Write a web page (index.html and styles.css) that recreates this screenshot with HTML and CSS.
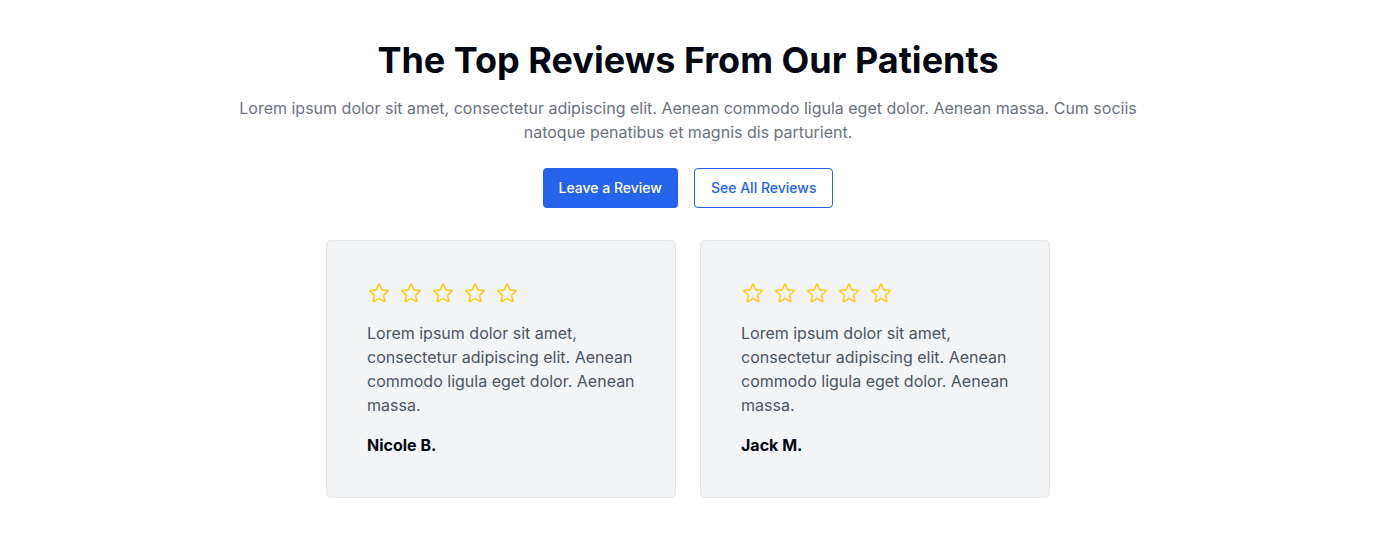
FILE: index.html
```html
<!DOCTYPE html>
<html lang="en">
<head>
<meta charset="utf-8">
<title>Reviews</title>
<link rel="stylesheet" href="styles.css">
</head>
<body>
<section class="reviews">
  <h1 class="title">The Top Reviews From Our Patients</h1>
  <p class="lead">Lorem ipsum dolor sit amet, consectetur adipiscing elit. Aenean commodo ligula eget dolor. Aenean massa. Cum sociis natoque penatibus et magnis dis parturient.</p>
  <div class="actions">
    <a class="btn btn-primary" href="#">Leave a Review</a>
    <a class="btn btn-outline" href="#">See All Reviews</a>
  </div>
  <div class="cards">
    <article class="card">
      <div class="stars">
        <svg viewBox="0 0 24 24"><path d="M11.48 3.499a.562.562 0 011.04 0l2.125 5.111a.563.563 0 00.475.345l5.518.442c.499.04.701.663.321.988l-4.204 3.602a.563.563 0 00-.182.557l1.285 5.385a.562.562 0 01-.84.61l-4.725-2.885a.563.563 0 00-.586 0L6.982 20.54a.562.562 0 01-.84-.61l1.285-5.386a.562.562 0 00-.182-.557l-4.204-3.602a.563.563 0 01.321-.988l5.518-.442a.563.563 0 00.475-.345L11.48 3.5z"/></svg>
        <svg viewBox="0 0 24 24"><path d="M11.48 3.499a.562.562 0 011.04 0l2.125 5.111a.563.563 0 00.475.345l5.518.442c.499.04.701.663.321.988l-4.204 3.602a.563.563 0 00-.182.557l1.285 5.385a.562.562 0 01-.84.61l-4.725-2.885a.563.563 0 00-.586 0L6.982 20.54a.562.562 0 01-.84-.61l1.285-5.386a.562.562 0 00-.182-.557l-4.204-3.602a.563.563 0 01.321-.988l5.518-.442a.563.563 0 00.475-.345L11.48 3.5z"/></svg>
        <svg viewBox="0 0 24 24"><path d="M11.48 3.499a.562.562 0 011.04 0l2.125 5.111a.563.563 0 00.475.345l5.518.442c.499.04.701.663.321.988l-4.204 3.602a.563.563 0 00-.182.557l1.285 5.385a.562.562 0 01-.84.61l-4.725-2.885a.563.563 0 00-.586 0L6.982 20.54a.562.562 0 01-.84-.61l1.285-5.386a.562.562 0 00-.182-.557l-4.204-3.602a.563.563 0 01.321-.988l5.518-.442a.563.563 0 00.475-.345L11.48 3.5z"/></svg>
        <svg viewBox="0 0 24 24"><path d="M11.48 3.499a.562.562 0 011.04 0l2.125 5.111a.563.563 0 00.475.345l5.518.442c.499.04.701.663.321.988l-4.204 3.602a.563.563 0 00-.182.557l1.285 5.385a.562.562 0 01-.84.61l-4.725-2.885a.563.563 0 00-.586 0L6.982 20.54a.562.562 0 01-.84-.61l1.285-5.386a.562.562 0 00-.182-.557l-4.204-3.602a.563.563 0 01.321-.988l5.518-.442a.563.563 0 00.475-.345L11.48 3.5z"/></svg>
        <svg viewBox="0 0 24 24"><path d="M11.48 3.499a.562.562 0 011.04 0l2.125 5.111a.563.563 0 00.475.345l5.518.442c.499.04.701.663.321.988l-4.204 3.602a.563.563 0 00-.182.557l1.285 5.385a.562.562 0 01-.84.61l-4.725-2.885a.563.563 0 00-.586 0L6.982 20.54a.562.562 0 01-.84-.61l1.285-5.386a.562.562 0 00-.182-.557l-4.204-3.602a.563.563 0 01.321-.988l5.518-.442a.563.563 0 00.475-.345L11.48 3.5z"/></svg>
      </div>
      <p class="quote">Lorem ipsum dolor sit amet, consectetur adipiscing elit. Aenean commodo ligula eget dolor. Aenean massa.</p>
      <p class="name">Nicole B.</p>
    </article>
    <article class="card">
      <div class="stars">
        <svg viewBox="0 0 24 24"><path d="M11.48 3.499a.562.562 0 011.04 0l2.125 5.111a.563.563 0 00.475.345l5.518.442c.499.04.701.663.321.988l-4.204 3.602a.563.563 0 00-.182.557l1.285 5.385a.562.562 0 01-.84.61l-4.725-2.885a.563.563 0 00-.586 0L6.982 20.54a.562.562 0 01-.84-.61l1.285-5.386a.562.562 0 00-.182-.557l-4.204-3.602a.563.563 0 01.321-.988l5.518-.442a.563.563 0 00.475-.345L11.48 3.5z"/></svg>
        <svg viewBox="0 0 24 24"><path d="M11.48 3.499a.562.562 0 011.04 0l2.125 5.111a.563.563 0 00.475.345l5.518.442c.499.04.701.663.321.988l-4.204 3.602a.563.563 0 00-.182.557l1.285 5.385a.562.562 0 01-.84.61l-4.725-2.885a.563.563 0 00-.586 0L6.982 20.54a.562.562 0 01-.84-.61l1.285-5.386a.562.562 0 00-.182-.557l-4.204-3.602a.563.563 0 01.321-.988l5.518-.442a.563.563 0 00.475-.345L11.48 3.5z"/></svg>
        <svg viewBox="0 0 24 24"><path d="M11.48 3.499a.562.562 0 011.04 0l2.125 5.111a.563.563 0 00.475.345l5.518.442c.499.04.701.663.321.988l-4.204 3.602a.563.563 0 00-.182.557l1.285 5.385a.562.562 0 01-.84.61l-4.725-2.885a.563.563 0 00-.586 0L6.982 20.54a.562.562 0 01-.84-.61l1.285-5.386a.562.562 0 00-.182-.557l-4.204-3.602a.563.563 0 01.321-.988l5.518-.442a.563.563 0 00.475-.345L11.48 3.5z"/></svg>
        <svg viewBox="0 0 24 24"><path d="M11.48 3.499a.562.562 0 011.04 0l2.125 5.111a.563.563 0 00.475.345l5.518.442c.499.04.701.663.321.988l-4.204 3.602a.563.563 0 00-.182.557l1.285 5.385a.562.562 0 01-.84.61l-4.725-2.885a.563.563 0 00-.586 0L6.982 20.54a.562.562 0 01-.84-.61l1.285-5.386a.562.562 0 00-.182-.557l-4.204-3.602a.563.563 0 01.321-.988l5.518-.442a.563.563 0 00.475-.345L11.48 3.5z"/></svg>
        <svg viewBox="0 0 24 24"><path d="M11.48 3.499a.562.562 0 011.04 0l2.125 5.111a.563.563 0 00.475.345l5.518.442c.499.04.701.663.321.988l-4.204 3.602a.563.563 0 00-.182.557l1.285 5.385a.562.562 0 01-.84.61l-4.725-2.885a.563.563 0 00-.586 0L6.982 20.54a.562.562 0 01-.84-.61l1.285-5.386a.562.562 0 00-.182-.557l-4.204-3.602a.563.563 0 01.321-.988l5.518-.442a.563.563 0 00.475-.345L11.48 3.5z"/></svg>
      </div>
      <p class="quote">Lorem ipsum dolor sit amet, consectetur adipiscing elit. Aenean commodo ligula eget dolor. Aenean massa.</p>
      <p class="name">Jack M.</p>
    </article>
  </div>
</section>
</body>
</html>
```
FILE: styles.css
```css
* { box-sizing: border-box; }
html, body { margin: 0; padding: 0; background: #fff; }
body { font-family: Inter, "Noto Sans", sans-serif; color: #111827; }

.reviews {
  display: flex;
  flex-direction: column;
  align-items: center;
  padding-top: 40px;
}
.title {
  margin: 0;
  font-size: 36px;
  line-height: 40px;
  font-weight: 700;
  color: #030712;
  text-align: center;
}
.lead {
  margin: 16px 0 0;
  max-width: 904px;
  font-size: 16px;
  line-height: 24px;
  color: #6b7280;
  text-align: center;
}
.actions {
  margin-top: 24px;
  display: flex;
  gap: 16px;
}
.btn {
  display: inline-flex;
  align-items: center;
  justify-content: center;
  height: 40px;
  padding: 0 16px 1px;
  border-radius: 4px;
  font-size: 14px;
  font-weight: 500;
  text-decoration: none;
}
.btn-primary { background: #2563eb; color: #fff; border: 0; }
.btn-outline { background: #fff; color: #2563eb; border: 1px solid #2563eb; }

.cards {
  margin-top: 32px;
  display: flex;
  gap: 24px;
}
.card {
  width: 350px;
  padding: 40px;
  background: #f3f4f6;
  border: 1px solid #e5e7eb;
  border-radius: 5px;
}
.stars {
  display: flex;
  gap: 8px;
  height: 24px;
}
.stars svg {
  width: 24px;
  height: 24px;
  fill: none;
  stroke: #facc15;
  stroke-width: 1.5;
  stroke-linejoin: round;
  stroke-linecap: round;
}
.quote {
  margin: 16px 0 0;
  font-size: 16px;
  line-height: 24px;
  color: #4b5563;
}
.name {
  margin: 16px 0 0;
  font-size: 16px;
  line-height: 24px;
  font-weight: 700;
  color: #030712;
}
```
